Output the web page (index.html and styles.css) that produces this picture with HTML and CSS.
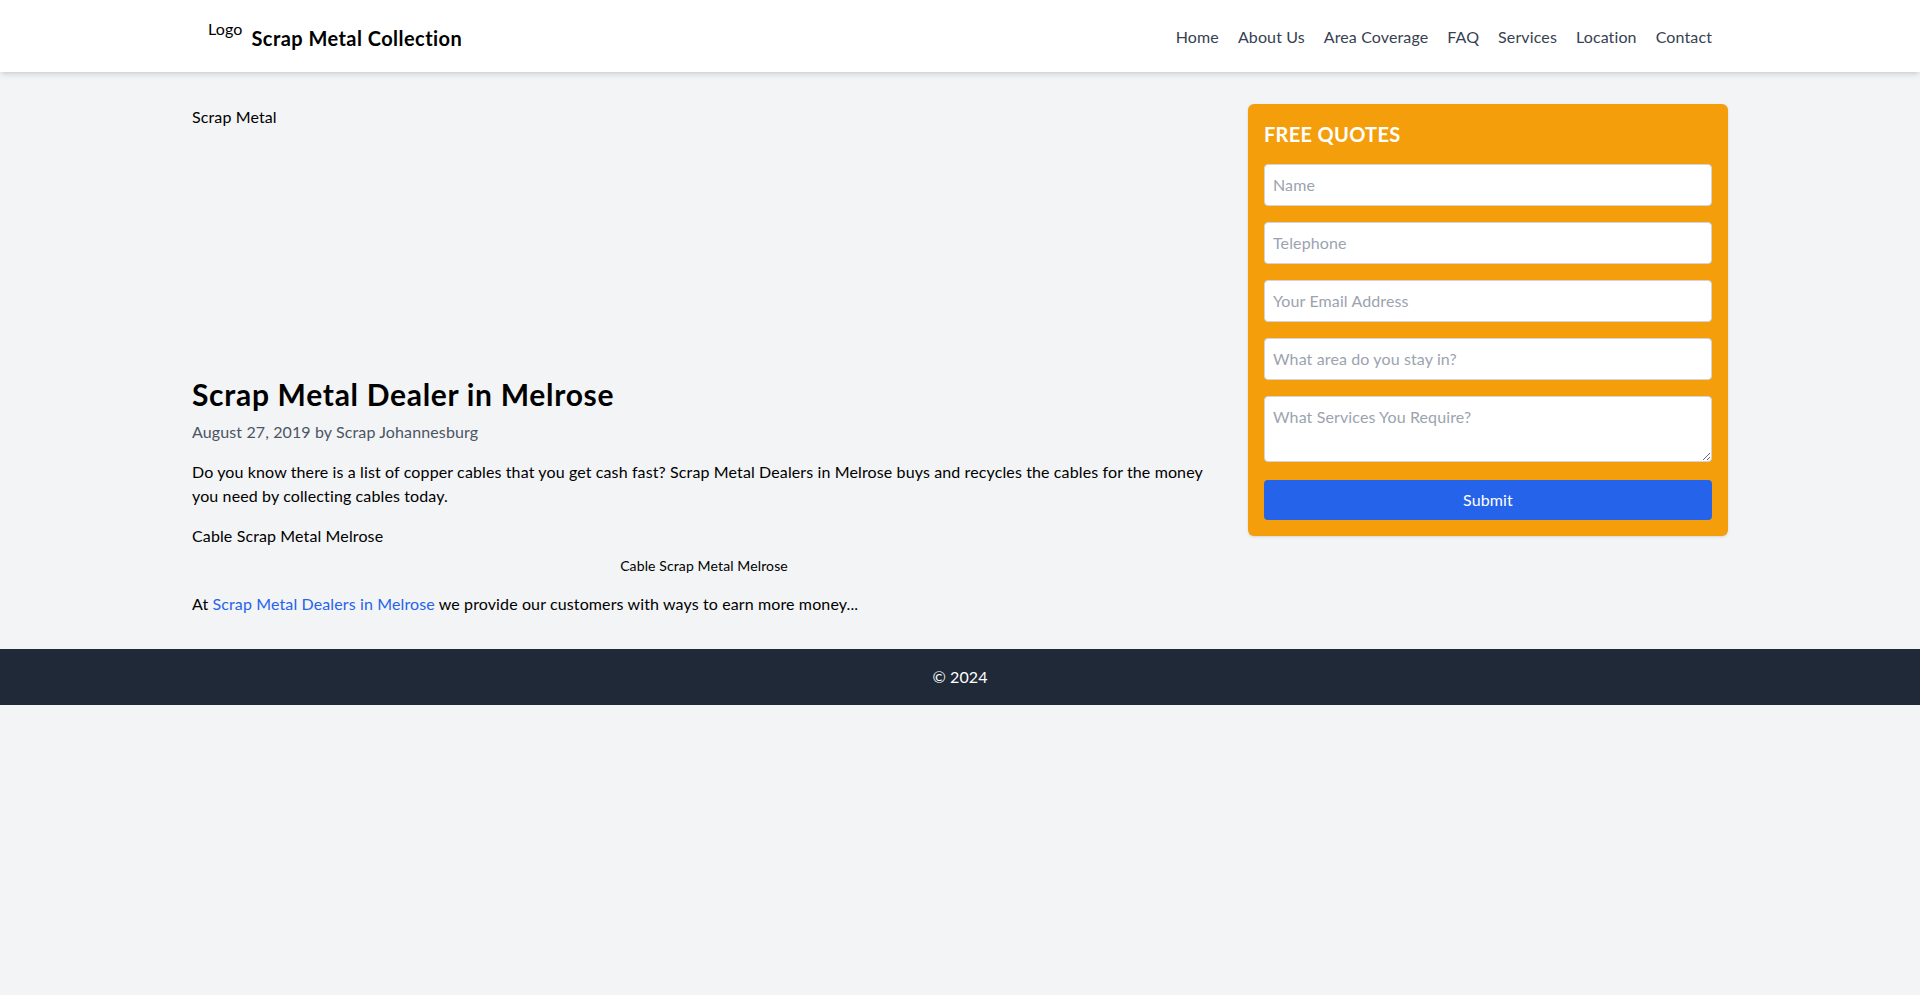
FILE: index.html
```html
<!DOCTYPE html>
<html lang="en">
<head>
<meta charset="utf-8">
<title>Scrap Metal Dealer in Melrose</title>
<link rel="stylesheet" href="styles.css">
</head>
<body>
<header class="site-header">
  <div class="header-inner">
    <a class="brand" href="#">
      <span class="logo">Logo</span>
      <span class="brand-title">Scrap Metal Collection</span>
    </a>
    <nav class="nav">
      <a href="#">Home</a>
      <a href="#">About Us</a>
      <a href="#">Area Coverage</a>
      <a href="#">FAQ</a>
      <a href="#">Services</a>
      <a href="#">Location</a>
      <a href="#">Contact</a>
    </nav>
  </div>
</header>

<div class="page">
  <main class="content">
    <div class="hero-img">Scrap Metal</div>
    <h1 class="post-title">Scrap Metal Dealer in Melrose</h1>
    <p class="meta">August 27, 2019 by Scrap Johannesburg</p>
    <p class="para">Do you know there is a list of copper cables that you get cash fast? Scrap Metal Dealers in Melrose buys and recycles the cables for the money you need by collecting cables today.</p>
    <figure class="figure">
      <div class="fig-img">Cable Scrap Metal Melrose</div>
      <figcaption class="caption">Cable Scrap Metal Melrose</figcaption>
    </figure>
    <p class="para">At <a class="link" href="#">Scrap Metal Dealers in Melrose</a> we provide our customers with ways to earn more money...</p>
  </main>
  <aside class="sidebar">
    <div class="quote-box">
      <h2 class="quote-title">FREE QUOTES</h2>
      <form class="quote-form">
        <input class="field" type="text" placeholder="Name">
        <input class="field" type="tel" placeholder="Telephone">
        <input class="field" type="email" placeholder="Your Email Address">
        <input class="field" type="text" placeholder="What area do you stay in?">
        <textarea class="field area" rows="2" placeholder="What Services You Require?"></textarea>
        <button class="submit" type="button">Submit</button>
      </form>
    </div>
  </aside>
</div>

<footer class="site-footer">
  <p>© 2024</p>
</footer>
</body>
</html>
```

FILE: styles.css
```css
* { box-sizing: border-box; }
html, body { margin: 0; padding: 0; }
body {
  background: #f3f4f6;
  font-family: "Lato", "Open Sans", sans-serif;
  font-size: 16px;
  line-height: 24px;
  letter-spacing: 0.12px;
  color: #000;
}
a { color: inherit; text-decoration: none; }

.site-header {
  background: #fff;
  box-shadow: 0 4px 6px -1px rgba(0,0,0,0.1), 0 2px 4px -2px rgba(0,0,0,0.1);
  position: relative;
}
.header-inner {
  max-width: 1536px;
  margin: 0 auto;
  padding: 16px 16px;
  display: flex;
  justify-content: space-between;
  align-items: center;
}
.brand { display: flex; align-items: center; }
.logo {
  display: block;
  height: 40px;
  font-size: 16px;
  line-height: 24px;
  margin-right: 9px;
  padding-top: 1px;
}
.brand-title {
  font-size: 20px;
  line-height: 28px;
  font-weight: 700;
  letter-spacing: 0.45px;
  padding-top: 4px;
}
.nav { display: flex; gap: 19px; padding-top: 2px; }
.nav a { color: #374151; }

.page {
  max-width: 1536px;
  margin: 0 auto;
  padding: 32px 0 33px;
  display: flex;
  align-items: flex-start;
}
.content { width: 66.6667%; }
.sidebar { width: 33.3333%; padding-left: 32px; }

.hero-img { height: 256px; margin-bottom: 16px; padding-top: 1px; }
.post-title {
  margin: 0;
  font-size: 30px;
  line-height: 36px;
  font-weight: 700;
  letter-spacing: 0.7px;
}
.meta { margin: 8px 0 16px; color: #4b5563; }
.para { margin: 0 0 16px; }
.para:last-child { margin-bottom: 0; }
.link { color: #2563eb; }
.figure { margin: 0 0 16px; }
.caption {
  margin-top: 8px;
  text-align: center;
  font-size: 14px;
  line-height: 20px;
}

.quote-box {
  background: #f59e0b;
  padding: 16px;
  border-radius: 6px;
  box-shadow: 0 1px 3px 0 rgba(0,0,0,0.1), 0 1px 2px -1px rgba(0,0,0,0.1);
}
.quote-title {
  margin: 0 0 16px;
  color: #fff;
  font-size: 20px;
  line-height: 28px;
  font-weight: 700;
  letter-spacing: 0.3px;
}
.quote-form { display: flex; flex-direction: column; }
.field {
  display: block;
  width: 100%;
  padding: 8px;
  border: 1px solid #d1d5db;
  border-radius: 4px;
  background: #fff;
  font-family: inherit;
  font-size: 16px;
  line-height: 24px;
  letter-spacing: 0.12px;
  margin: 0 0 16px;
  color: #111827;
}
.field::placeholder { color: #9ca3af; }
.area { height: 66px; margin-bottom: 18px; resize: vertical; }
.submit {
  display: block;
  width: 100%;
  padding: 8px;
  border: 0;
  border-radius: 4px;
  background: #2563eb;
  color: #fff;
  font-family: inherit;
  font-size: 16px;
  line-height: 24px;
  letter-spacing: 0.12px;
}

.site-footer {
  background: #1f2937;
  color: #fff;
  text-align: center;
  padding: 16px;
}
.site-footer p { margin: 0; }
```
